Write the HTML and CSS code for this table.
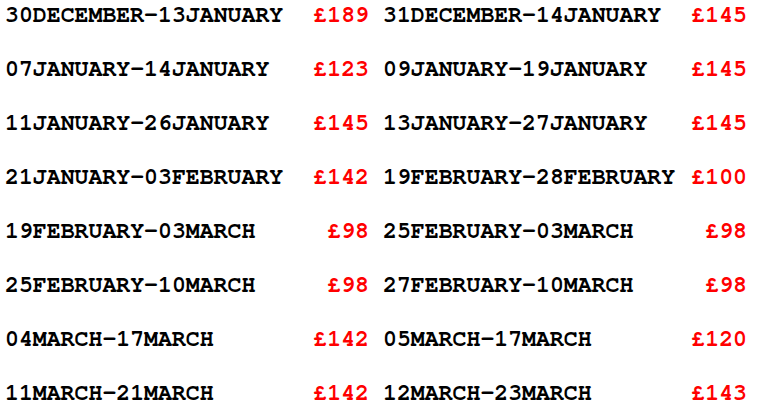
FILE: index.html
```html
<!DOCTYPE html>
<html>
<head>
<meta charset="utf-8">
<link rel="stylesheet" href="styles.css">
</head>
<body>
<div class="grid">
  <div class="row"><span class="date">30DECEMBER-13JANUARY</span><span class="price">£189</span></div>
  <div class="row"><span class="date">31DECEMBER-14JANUARY</span><span class="price">£145</span></div>
  <div class="row"><span class="date">07JANUARY-14JANUARY</span><span class="price">£123</span></div>
  <div class="row"><span class="date">09JANUARY-19JANUARY</span><span class="price">£145</span></div>
  <div class="row"><span class="date">11JANUARY-26JANUARY</span><span class="price">£145</span></div>
  <div class="row"><span class="date">13JANUARY-27JANUARY</span><span class="price">£145</span></div>
  <div class="row"><span class="date">21JANUARY-03FEBRUARY</span><span class="price">£142</span></div>
  <div class="row"><span class="date">19FEBRUARY-28FEBRUARY</span><span class="price">£100</span></div>
  <div class="row"><span class="date">19FEBRUARY-03MARCH</span><span class="price">£98</span></div>
  <div class="row"><span class="date">25FEBRUARY-03MARCH</span><span class="price">£98</span></div>
  <div class="row"><span class="date">25FEBRUARY-10MARCH</span><span class="price">£98</span></div>
  <div class="row"><span class="date">27FEBRUARY-10MARCH</span><span class="price">£98</span></div>
  <div class="row"><span class="date">04MARCH-17MARCH</span><span class="price">£142</span></div>
  <div class="row"><span class="date">05MARCH-17MARCH</span><span class="price">£120</span></div>
  <div class="row"><span class="date">11MARCH-21MARCH</span><span class="price">£142</span></div>
  <div class="row"><span class="date">12MARCH-23MARCH</span><span class="price">£143</span></div>
</div>
</body>
</html>
```
FILE: styles.css
```css
html, body {
  margin: 0;
  padding: 0;
  background: #ffffff;
}
.grid {
  display: grid;
  grid-template-columns: 364px 364px;
  column-gap: 14px;
  padding: 0 0 0 5px;
  margin-top: -12px;
  font-family: "FreeMono", "Liberation Mono", "Courier New", monospace;
  font-size: 23.2px;
  font-weight: bold;
}
.row {
  display: flex;
  justify-content: space-between;
  line-height: 54px;
  white-space: nowrap;
}
.date {
  color: #000000;
}
.price {
  color: #ff0000;
}
```
